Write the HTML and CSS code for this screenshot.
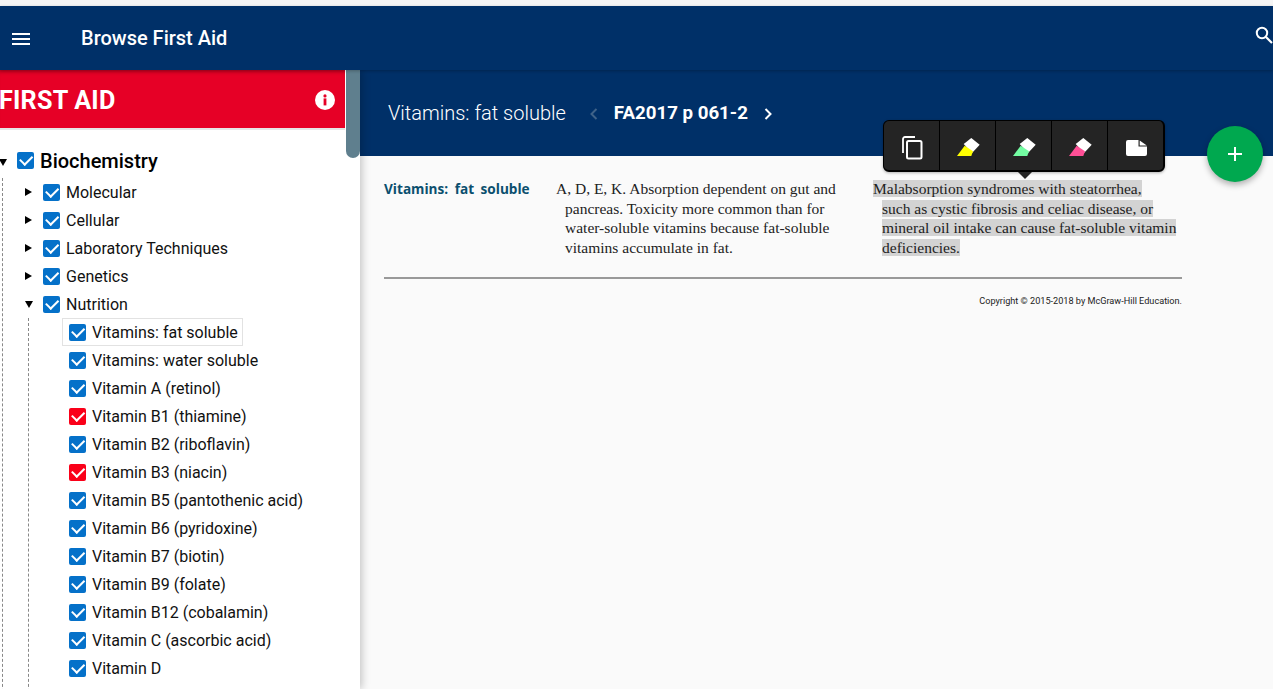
FILE: index.html
```html
<!DOCTYPE html>
<html lang="en">
<head>
<meta charset="utf-8">
<title>Browse First Aid</title>
<link rel="stylesheet" href="styles.css">
</head>
<body>
<div class="strip"></div>
<header class="appbar">
  <svg class="menu" viewBox="0 0 18 12" width="18" height="12"><path d="M0 0h18v2H0zM0 5h18v2H0zM0 10h18v2H0z" fill="#fff"/></svg>
  <span class="app-title">Browse First Aid</span>
  <svg class="search" viewBox="0 0 18 18" width="18" height="18"><circle cx="7" cy="7" r="5.2" fill="none" stroke="#fff" stroke-width="2"/><path d="M11 11l6 6" stroke="#fff" stroke-width="2.2" fill="none"/></svg>
</header>
<div class="main">
  <aside class="sidebar">
    <div class="side-scroll">
      <div class="banner">
        <span class="banner-title">FIRST AID</span>
        <svg viewBox="0 0 20 20" width="20" height="20"><circle cx="10" cy="10" r="10" fill="#fff"/><rect x="8.6" y="8.4" width="2.8" height="7" fill="#e60026"/><circle cx="10" cy="5.9" r="1.6" fill="#e60026"/></svg>
      </div>
      <div class="tree">
        <div class="row root"><i class="tri down"></i><i class="cb"></i><span>Biochemistry</span></div>
        <div class="level1">
          <div class="row"><i class="tri"></i><i class="cb"></i><span>Molecular</span></div>
          <div class="row"><i class="tri"></i><i class="cb"></i><span>Cellular</span></div>
          <div class="row"><i class="tri"></i><i class="cb"></i><span>Laboratory Techniques</span></div>
          <div class="row"><i class="tri"></i><i class="cb"></i><span>Genetics</span></div>
          <div class="row"><i class="tri down"></i><i class="cb"></i><span>Nutrition</span></div>
          <div class="level2">
            <div class="row leaf current"><i class="cb"></i><span>Vitamins: fat soluble</span></div>
            <div class="row leaf"><i class="cb"></i><span>Vitamins: water soluble</span></div>
            <div class="row leaf"><i class="cb"></i><span>Vitamin A (retinol)</span></div>
            <div class="row leaf"><i class="cb red"></i><span>Vitamin B1 (thiamine)</span></div>
            <div class="row leaf"><i class="cb"></i><span>Vitamin B2 (riboflavin)</span></div>
            <div class="row leaf"><i class="cb red"></i><span>Vitamin B3 (niacin)</span></div>
            <div class="row leaf"><i class="cb"></i><span>Vitamin B5 (pantothenic acid)</span></div>
            <div class="row leaf"><i class="cb"></i><span>Vitamin B6 (pyridoxine)</span></div>
            <div class="row leaf"><i class="cb"></i><span>Vitamin B7 (biotin)</span></div>
            <div class="row leaf"><i class="cb"></i><span>Vitamin B9 (folate)</span></div>
            <div class="row leaf"><i class="cb"></i><span>Vitamin B12 (cobalamin)</span></div>
            <div class="row leaf"><i class="cb"></i><span>Vitamin C (ascorbic acid)</span></div>
            <div class="row leaf"><i class="cb"></i><span>Vitamin D</span></div>
          </div>
        </div>
      </div>
    </div>
    <div class="scrolltrack"><div class="thumb"></div></div>
  </aside>
  <main class="content">
    <div class="subbar">
      <span class="sub-title">Vitamins: fat soluble</span>
      <svg class="chev" viewBox="0 0 8 12" width="8" height="12"><path d="M6.5 1L1.5 6l5 5" fill="none" stroke="#3f6288" stroke-width="2"/></svg>
      <span class="page-ref">FA2017 p 061-2</span>
      <svg class="chev" viewBox="0 0 8 12" width="8" height="12"><path d="M1.5 1l5 5-5 5" fill="none" stroke="#fff" stroke-width="2"/></svg>
    </div>
    <article class="article">
      <div class="fact">
        <div class="fact-label">Vitamins: fat soluble</div>
        <div class="fact-text">
          <span class="first">A, D, E, K. Absorption dependent on gut and</span>
          <span>pancreas. Toxicity more common than for</span>
          <span>water-soluble vitamins because fat-soluble</span>
          <span>vitamins accumulate in fat.</span>
        </div>
        <div class="fact-text selected">
          <span class="first"><mark>Malabsorption syndromes with steatorrhea,</mark></span>
          <span><mark>such as cystic fibrosis and celiac disease, or</mark></span>
          <span><mark>mineral oil intake can cause fat-soluble vitamin</mark></span>
          <span><mark>deficiencies.</mark></span>
        </div>
      </div>
      <p class="copyright">Copyright © 2015-2018 by McGraw-Hill Education.</p>
    </article>
  </main>
</div>
<div class="toolbar">
  <div class="tool copy"><svg viewBox="0 0 22 24" width="22" height="24"><path d="M2 17V3a2 2 0 0 1 2-2h10" fill="none" stroke="#fff" stroke-width="1.8"/><rect x="6" y="5" width="14.5" height="17.5" rx="1.5" fill="none" stroke="#fff" stroke-width="2"/></svg></div>
  <div class="tool hl"><svg viewBox="0 0 23 18" width="23" height="18"><path d="M14.3 0l8.4 6.7L15 15 6.7 6z" fill="#fff"/><path d="M0 18L7.7 7.7l8.3 5.6-1.7 4.7z" fill="#ffff00"/></svg></div>
  <div class="tool hl"><svg viewBox="0 0 23 18" width="23" height="18"><path d="M14.3 0l8.4 6.7L15 15 6.7 6z" fill="#fff"/><path d="M0 18L7.7 7.7l8.3 5.6-1.7 4.7z" fill="#73fca2"/></svg></div>
  <div class="tool hl"><svg viewBox="0 0 23 18" width="23" height="18"><path d="M14.3 0l8.4 6.7L15 15 6.7 6z" fill="#fff"/><path d="M0 18L7.7 7.7l8.3 5.6-1.7 4.7z" fill="#ff4f96"/></svg></div>
  <div class="tool note"><svg viewBox="0 0 21 16" width="21" height="16"><path d="M2 0h10.5v6.5H21V14a2 2 0 0 1-2 2H2a2 2 0 0 1-2-2V2a2 2 0 0 1 2-2z" fill="#fff"/><path d="M13.7 0.4L20.8 5.4H13.7z" fill="#fff"/></svg></div>
</div>
<button class="fab" type="button"><svg viewBox="0 0 14 14" width="14" height="14"><path d="M6 0h2v6h6v2H8v6H6V8H0V6h6z" fill="#fff"/></svg></button>
</body>
</html>
```
FILE: styles.css
```css
* { box-sizing: border-box; }
html, body { margin: 0; height: 100%; overflow: hidden; }
body {
  display: flex;
  flex-direction: column;
  height: 689px;
  font-family: Roboto, "Liberation Sans", sans-serif;
  background: #fafafa;
  position: relative;
}
.strip { height: 6px; background: #f5f5f5; flex: none; }
.appbar {
  height: 64px;
  flex: none;
  background: #003068;
  display: flex;
  align-items: center;
  padding-left: 12px;
  color: #fff;
  position: relative;
  z-index: 3;
  box-shadow: 0 1px 3px rgba(0,0,0,.25);
}
.menu { margin-right: 51px; flex: none; margin-top: 1px; }
.app-title { font-size: 20px; font-weight: 500; }
.search { position: absolute; left: 1255px; top: 20px; }

.main { flex: 1; display: flex; min-height: 0; }
.sidebar {
  width: 360px;
  flex: none;
  background: #fff;
  display: flex;
  overflow: hidden;
  position: relative;
  z-index: 2;
  box-shadow: 2px 0 8px rgba(0,0,0,.22);
}
.side-scroll { width: 345px; flex: none; }
.scrolltrack { width: 15px; flex: none; padding-left: 1px; }
.thumb { height: 88px; background: #5f7f8e; border-radius: 0 0 7px 7px; }

.banner {
  height: 60px;
  background: #e60026;
  border-bottom: 2px solid #e6e6e6;
  display: flex;
  align-items: center;
  justify-content: space-between;
  padding: 2px 10px 0 0;
  box-shadow: inset 0 5px 4px -3px rgba(0,0,0,.2);
}
.banner-title { color: #fff; font-size: 25.2px; font-weight: 700; letter-spacing: .2px; margin: 0 0 0 -1px; }

.tree { padding-top: 14px; }
.row { height: 28px; display: flex; align-items: center; font-size: 16px; color: #111; }
.row.root { height: 34px; font-size: 20px; font-weight: 500; color: #000; margin-left: -1px; }
.cb {
  width: 17px;
  height: 17px;
  flex: none;
  border-radius: 2px;
  background: #0571c9;
  position: relative;
  margin-right: 6px;
}
.cb::after {
  content: "";
  position: absolute;
  left: 3px;
  top: 3px;
  width: 10px;
  height: 5.5px;
  border-left: 2px solid #fff;
  border-bottom: 2px solid #fff;
  transform: rotate(-45deg);
}
.cb.red { background: #fa0019; }
.tri {
  width: 0;
  height: 0;
  flex: none;
  border-left: 7px solid #000;
  border-top: 4px solid transparent;
  border-bottom: 4px solid transparent;
  margin-left: 25px;
  margin-right: 11px;
}
.tri.down {
  border-left: 4px solid transparent;
  border-right: 4px solid transparent;
  border-top: 7px solid #000;
  border-bottom: 0;
  margin-right: 10px;
}
.root .tri.down { margin-left: 0; margin-top: 2px; }
.root .cb { margin-top: -1px; }
.level1 { border-left: 1px dashed #888; margin-left: 2px; }
.level1 > .row { margin-left: -3px; }
.level2 { border-left: 1px dashed #888; margin-left: 25px; padding-left: 33px; padding-bottom: 40px; }
.level2 .leaf { padding-left: 7px; }
.leaf.current { width: 181px; border: 1px solid #e2e2e2; padding-left: 6px; }

.content { flex: 1; min-width: 0; }
.subbar {
  height: 86px;
  background: #003068;
  display: flex;
  align-items: flex-start;
  padding: 32px 0 0 28px;
  color: #fff;
}
.sub-title { font-size: 20px; font-weight: 300; line-height: 23px; margin-right: 24px; }
.page-ref { font-size: 18.7px; font-weight: 700; line-height: 23px; margin: 0 16px 0 16px; }
.chev { margin-top: 6px; flex: none; }

.article { width: 822px; padding: 23px 0 0 24px; }
.fact {
  display: grid;
  grid-template-columns: 172px 317px 1fr;
  height: 100px;
  border-bottom: 2px solid #999;
}
.fact-label {
  font-family: "Open Sans", "Liberation Sans", sans-serif;
  font-weight: 700;
  font-size: 13.6px;
  line-height: 19.67px;
  color: #0b4f6e;
  word-spacing: 3px;
}
.fact-text {
  font-family: "Liberation Serif", serif;
  font-size: 15.5px;
  line-height: 19.67px;
  color: #222;
}
.fact-text span { display: block; padding-left: 9px; white-space: nowrap; }
.fact-text span.first { padding-left: 0; }
mark { background: #d3d3d3; color: #222; }
.copyright { margin: 17px 0 0; font-size: 9.15px; line-height: 11px; text-align: right; color: #222; }

.toolbar {
  position: absolute;
  left: 883px;
  top: 120px;
  width: 282px;
  height: 52px;
  background: #242424;
  border: 1px solid #000;
  border-width: 1px 2px 2px 1px;
  border-radius: 6px;
  display: flex;
  z-index: 5;
  box-shadow: 0 1px 3px rgba(0,0,0,.3);
}
.toolbar::after {
  content: "";
  position: absolute;
  left: 134px;
  bottom: -9px;
  border-left: 7px solid transparent;
  border-right: 7px solid transparent;
  border-top: 7px solid #242424;
}
.tool { flex: 1; display: flex; align-items: center; justify-content: center; border-right: 1px solid #000; }
.tool:last-child { border-right: 0; }
.copy svg { margin-top: 4px; }
.hl svg { margin: 2px 0 0 2px; }
.note svg { margin: 4px 0 0 2px; }
.fab {
  position: absolute;
  left: 1207px;
  top: 126px;
  width: 56px;
  height: 56px;
  border: 0;
  padding: 0;
  border-radius: 50%;
  background: #00a84f;
  display: flex;
  align-items: center;
  justify-content: center;
  z-index: 6;
  box-shadow: 0 3px 6px rgba(0,0,0,.3);
}
```
